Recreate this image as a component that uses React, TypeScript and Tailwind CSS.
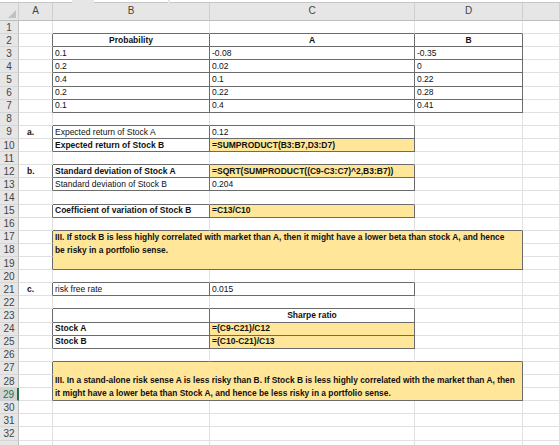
type Cell = { t: string; b?: boolean; center?: boolean; fill?: boolean; indent?: boolean };

const COLS = ["A", "B", "C", "D", "E"];
const ROWS = Array.from({ length: 33 }, (_, i) => i + 1);

const cells: Record<string, Cell> = {
  B2: { t: "Probability", b: true, center: true },
  C2: { t: "A", b: true, center: true },
  D2: { t: "B", b: true, center: true },
  B3: { t: "0.1" }, C3: { t: "-0.08" }, D3: { t: "-0.35" },
  B4: { t: "0.2" }, C4: { t: "0.02" }, D4: { t: "0" },
  B5: { t: "0.4" }, C5: { t: "0.1" }, D5: { t: "0.22" },
  B6: { t: "0.2" }, C6: { t: "0.22" }, D6: { t: "0.28" },
  B7: { t: "0.1" }, C7: { t: "0.4" }, D7: { t: "0.41" },
  A9: { t: "a.", b: true, indent: true },
  B9: { t: "Expected return of Stock A" },
  C9: { t: "0.12" },
  B10: { t: "Expected return of Stock B", b: true },
  C10: { t: "=SUMPRODUCT(B3:B7,D3:D7)", b: true, fill: true },
  A12: { t: "b.", b: true, indent: true },
  B12: { t: "Standard deviation of Stock A", b: true },
  C12: { t: "=SQRT(SUMPRODUCT((C9-C3:C7)^2,B3:B7))", b: true, fill: true },
  B13: { t: "Standard deviation of Stock B" },
  C13: { t: "0.204" },
  B15: { t: "Coefficient of variation of Stock B", b: true },
  C15: { t: "=C13/C10", b: true, fill: true },
  A21: { t: "c.", b: true, indent: true },
  B21: { t: "risk free rate" },
  C21: { t: "0.015" },
  C23: { t: "Sharpe ratio", b: true, center: true },
  B24: { t: "Stock A", b: true },
  C24: { t: "=(C9-C21)/C12", b: true, fill: true },
  B25: { t: "Stock B", b: true },
  C25: { t: "=(C10-C21)/C13", b: true, fill: true },
};

// bordered ranges: [rowFrom, rowTo, colFrom, colTo] (A = 0)
const boxes = [
  [2, 7, 1, 3],
  [9, 10, 1, 2],
  [12, 13, 1, 2],
  [15, 15, 1, 2],
  [17, 19, 1, 3],
  [21, 21, 1, 2],
  [23, 25, 1, 2],
  [27, 29, 1, 3],
];

const merges = [
  {
    r: 17,
    bottom: false,
    lines: [
      "III. If stock B is less highly correlated with market than A, then it might have a lower beta than stock A, and hence",
      "be risky in a portfolio sense.",
    ],
  },
  {
    r: 27,
    bottom: true,
    lines: [
      "III. In a stand-alone risk sense A is less risky than B. If Stock B is less highly correlated with the market than A, then",
      "it might have a lower beta than Stock A, and hence be less risky in a portfolio sense.",
    ],
  },
];

function boxed(r: number, c: number) {
  return boxes.some(([r1, r2, c1, c2]) => r >= r1 && r <= r2 && c >= c1 && c <= c2);
}

function covered(r: number, c: number) {
  return merges.some((m) => r >= m.r && r <= m.r + 2 && c >= 1 && c <= 3 && !(r === m.r && c === 1));
}

function Corner() {
  return (
    <div className="flex items-end justify-end border-r border-b border-r-[#cfcfcf] border-b-[#bdbdbd] bg-[#e6e6e6] pr-[2px] pb-[2px]">
      <svg width="8" height="8" viewBox="0 0 8 8">
        <polygon points="8,0 8,8 0,8" fill="#c2c2c2" />
      </svg>
    </div>
  );
}

export default function App() {
  const grid: React.ReactNode[] = [];

  grid.push(<Corner key="corner" />);
  COLS.forEach((c) =>
    grid.push(
      <div
        key={"h" + c}
        className="flex items-end justify-center border-r border-b border-r-[#cfcfcf] border-b-[#bdbdbd] bg-[#e6e6e6] pb-[2px] text-[10px] text-[#444]"
      >
        {c === "E" ? "" : c}
      </div>
    )
  );

  ROWS.forEach((r) => {
    const sel = r === 29;
    grid.push(
      <div
        key={"r" + r}
        className={`flex items-center justify-center border-b text-[10px] ${
          sel
            ? "border-r-2 border-r-[#217346] border-b-[#cfcfcf] bg-[#d3d3d3] text-[#217346]"
            : "border-r border-r-[#bdbdbd] border-b-[#d6d6d6] bg-[#e6e6e6] text-[#444]"
        }`}
      >
        {r < 33 ? r : ""}
      </div>
    );
    COLS.forEach((col, c) => {
      if (covered(r, c)) return;
      const m = merges.find((x) => x.r === r && c === 1);
      if (m) {
        grid.push(
          <div
            key={col + r}
            className={`col-span-3 row-span-3 flex flex-col border-r border-b border-r-[#6b6b6b] border-b-[#6b6b6b] bg-[#ffe699] pl-[2px] text-[8.4px] font-bold text-[#111] ${
              m.bottom ? "justify-end" : "justify-start"
            }`}
          >
            {m.lines.map((l) => (
              <div key={l} className="flex h-[13.12px] items-center whitespace-nowrap">
                {l}
              </div>
            ))}
          </div>
        );
        return;
      }
      const cell = cells[col + r];
      const darkR = boxed(r, c) || boxed(r, c + 1);
      const darkB = boxed(r, c) || boxed(r + 1, c);
      grid.push(
        <div
          key={col + r}
          className={`flex items-center overflow-hidden whitespace-nowrap border-r border-b text-[8.5px] text-[#111] ${
            darkR ? "border-r-[#6b6b6b]" : "border-r-[#e0e0e0]"
          } ${darkB ? "border-b-[#6b6b6b]" : "border-b-[#e0e0e0]"} ${
            cell?.fill ? "bg-[#ffe699]" : "bg-white"
          } ${cell?.b ? "font-bold" : ""} ${
            cell?.center ? "justify-center" : cell?.indent ? "pl-[8px]" : "pl-[2px]"
          }`}
        >
          {cell?.t}
        </div>
      );
    });
  });

  return (
    <div className="h-[445px] w-[560px] overflow-hidden bg-white font-['Liberation_Sans',Arial,sans-serif]">
      <div className="flex h-[3px] gap-[2px] bg-[#e6e6e6]">
        <div className="w-[72px] border-b border-[#c6c6c6] bg-white" />
        <div className="w-[18px]" />
        <div className="w-[74px] border-b border-[#c6c6c6] bg-white" />
        <div className="flex-1 border-b border-[#c6c6c6] bg-white" />
      </div>
      <div className="grid grid-cols-[19px_34px_157px_205px_108px_1fr] grid-rows-[18px_repeat(33,13.12px)]">
        {grid}
      </div>
    </div>
  );
}
